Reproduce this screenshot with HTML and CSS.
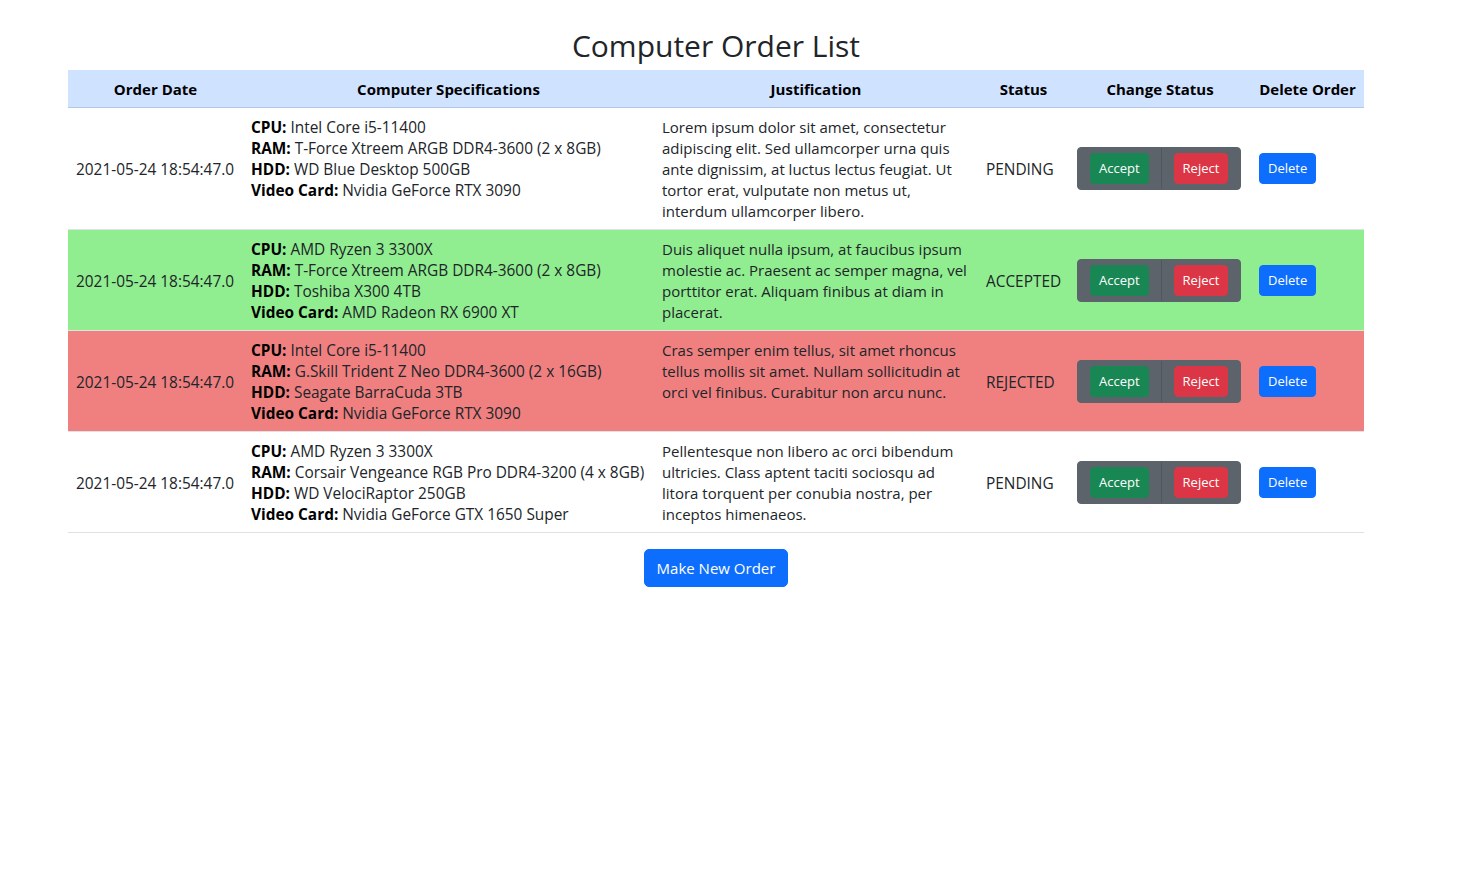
FILE: index.html
```html
<!DOCTYPE html>
<html lang="en">
<head>
<meta charset="utf-8">
<title>Computer Order List</title>
<link rel="stylesheet" href="styles.css">
</head>
<body>
<div class="page">
  <h1 class="title">Computer Order List</h1>
  <table class="orders">
    <colgroup>
      <col class="c-date"><col class="c-spec"><col class="c-just"><col class="c-status"><col class="c-change"><col class="c-del">
    </colgroup>
    <thead>
      <tr>
        <th>Order Date</th>
        <th>Computer Specifications</th>
        <th>Justification</th>
        <th>Status</th>
        <th>Change Status</th>
        <th>Delete Order</th>
      </tr>
    </thead>
    <tbody>
      <tr>
        <td>2021-05-24 18:54:47.0</td>
        <td class="top"><b>CPU:</b> Intel Core i5-11400<br><b>RAM:</b> T-Force Xtreem ARGB DDR4-3600 (2 x 8GB)<br><b>HDD:</b> WD Blue Desktop 500GB<br><b>Video Card:</b> Nvidia GeForce RTX 3090</td>
        <td class="top just">Lorem ipsum dolor sit amet, consectetur adipiscing elit. Sed ullamcorper urna quis ante dignissim, at luctus lectus feugiat. Ut tortor erat, vulputate non metus ut, interdum ullamcorper libero.</td>
        <td>PENDING</td>
        <td><div class="group"><span class="seg"><button class="btn sm green">Accept</button></span><span class="seg"><button class="btn sm red">Reject</button></span></div></td>
        <td><button class="btn sm blue">Delete</button></td>
      </tr>
      <tr class="accepted">
        <td>2021-05-24 18:54:47.0</td>
        <td class="top"><b>CPU:</b> AMD Ryzen 3 3300X<br><b>RAM:</b> T-Force Xtreem ARGB DDR4-3600 (2 x 8GB)<br><b>HDD:</b> Toshiba X300 4TB<br><b>Video Card:</b> AMD Radeon RX 6900 XT</td>
        <td class="top just">Duis aliquet nulla ipsum, at faucibus ipsum molestie ac. Praesent ac semper magna, vel porttitor erat. Aliquam finibus at diam in placerat.</td>
        <td>ACCEPTED</td>
        <td><div class="group"><span class="seg"><button class="btn sm green">Accept</button></span><span class="seg"><button class="btn sm red">Reject</button></span></div></td>
        <td><button class="btn sm blue">Delete</button></td>
      </tr>
      <tr class="rejected">
        <td>2021-05-24 18:54:47.0</td>
        <td class="top"><b>CPU:</b> Intel Core i5-11400<br><b>RAM:</b> G.Skill Trident Z Neo DDR4-3600 (2 x 16GB)<br><b>HDD:</b> Seagate BarraCuda 3TB<br><b>Video Card:</b> Nvidia GeForce RTX 3090</td>
        <td class="top just">Cras semper enim tellus, sit amet rhoncus tellus mollis sit amet. Nullam sollicitudin at orci vel finibus. Curabitur non arcu nunc.</td>
        <td>REJECTED</td>
        <td><div class="group"><span class="seg"><button class="btn sm green">Accept</button></span><span class="seg"><button class="btn sm red">Reject</button></span></div></td>
        <td><button class="btn sm blue">Delete</button></td>
      </tr>
      <tr>
        <td>2021-05-24 18:54:47.0</td>
        <td class="top"><b>CPU:</b> AMD Ryzen 3 3300X<br><b>RAM:</b> Corsair Vengeance RGB Pro DDR4-3200 (4 x 8GB)<br><b>HDD:</b> WD VelociRaptor 250GB<br><b>Video Card:</b> Nvidia GeForce GTX 1650 Super</td>
        <td class="top just">Pellentesque non libero ac orci bibendum ultricies. Class aptent taciti sociosqu ad litora torquent per conubia nostra, per inceptos himenaeos.</td>
        <td>PENDING</td>
        <td><div class="group"><span class="seg"><button class="btn sm green">Accept</button></span><span class="seg"><button class="btn sm red">Reject</button></span></div></td>
        <td><button class="btn sm blue">Delete</button></td>
      </tr>
    </tbody>
  </table>
  <div class="actions"><button class="btn blue big">Make New Order</button></div>
</div>
</body>
</html>
```
FILE: styles.css
```css
* { box-sizing: border-box; }
html, body { margin: 0; padding: 0; background: #fff; }
body {
  font-family: "Open Sans", "Noto Sans", sans-serif;
  font-size: 15.4px;
  color: #212529;
}
.page {
  width: 1296px;
  margin-left: 68px;
}
.title {
  margin: 0;
  padding-top: 26px;
  height: 70px;
  font-size: 30px;
  font-weight: 400;
  line-height: 40px;
  text-align: center;
  color: #212529;
}
.orders {
  width: 1296px;
  border-collapse: collapse;
  table-layout: fixed;
}
.c-date { width: 175px; }
.c-spec { width: 411px; }
.c-just { width: 324px; }
.c-status { width: 91px; }
.c-change { width: 182px; }
.c-del { width: 113px; }
.orders th, .orders td {
  padding: 9px 8px 7px;
  line-height: 21px;
  vertical-align: middle;
  border-bottom: 1px solid #dee2e6;
}
.orders td.top { vertical-align: top; }
.orders td.just { font-size: 15px; }
.orders th {
  background: #cfe2ff;
  font-size: 15px;
  font-weight: 700;
  white-space: nowrap;
  text-align: center;
  color: #000;
  border-bottom: 1px solid #b3c7e6;
}
.orders td { text-align: left; }
.orders tr.accepted td { background: #90ee90; }
.orders tr.rejected td { background: #f08080; }
.orders b { font-weight: 700; color: #000; }
.group {
  display: inline-flex;
  background: #5c636a;
  border: 1px solid #5c636a;
  border-radius: 4px;
  vertical-align: middle;
  margin-top: -2px;
}
.seg {
  display: inline-flex;
  padding: 5px 12px;
}
.seg + .seg { border-left: 1px solid #51575d; }
.btn {
  font-family: inherit;
  border: 1px solid transparent;
  color: #fff;
  border-radius: 4px;
  cursor: pointer;
}
.btn.sm {
  font-size: 13px;
  line-height: 21px;
  padding: 4px 8px;
}
td > .btn.sm { margin-top: -2px; vertical-align: middle; }
.green { background: #198754; border-color: #198754; }
.red { background: #dc3545; border-color: #dc3545; }
.blue { background: #0d6efd; border-color: #0d6efd; }
.actions {
  display: flex;
  justify-content: center;
  padding-top: 16px;
}
.btn.big {
  font-size: 15px;
  line-height: 24px;
  padding: 6px 12px;
  border-radius: 5px;
}
```
